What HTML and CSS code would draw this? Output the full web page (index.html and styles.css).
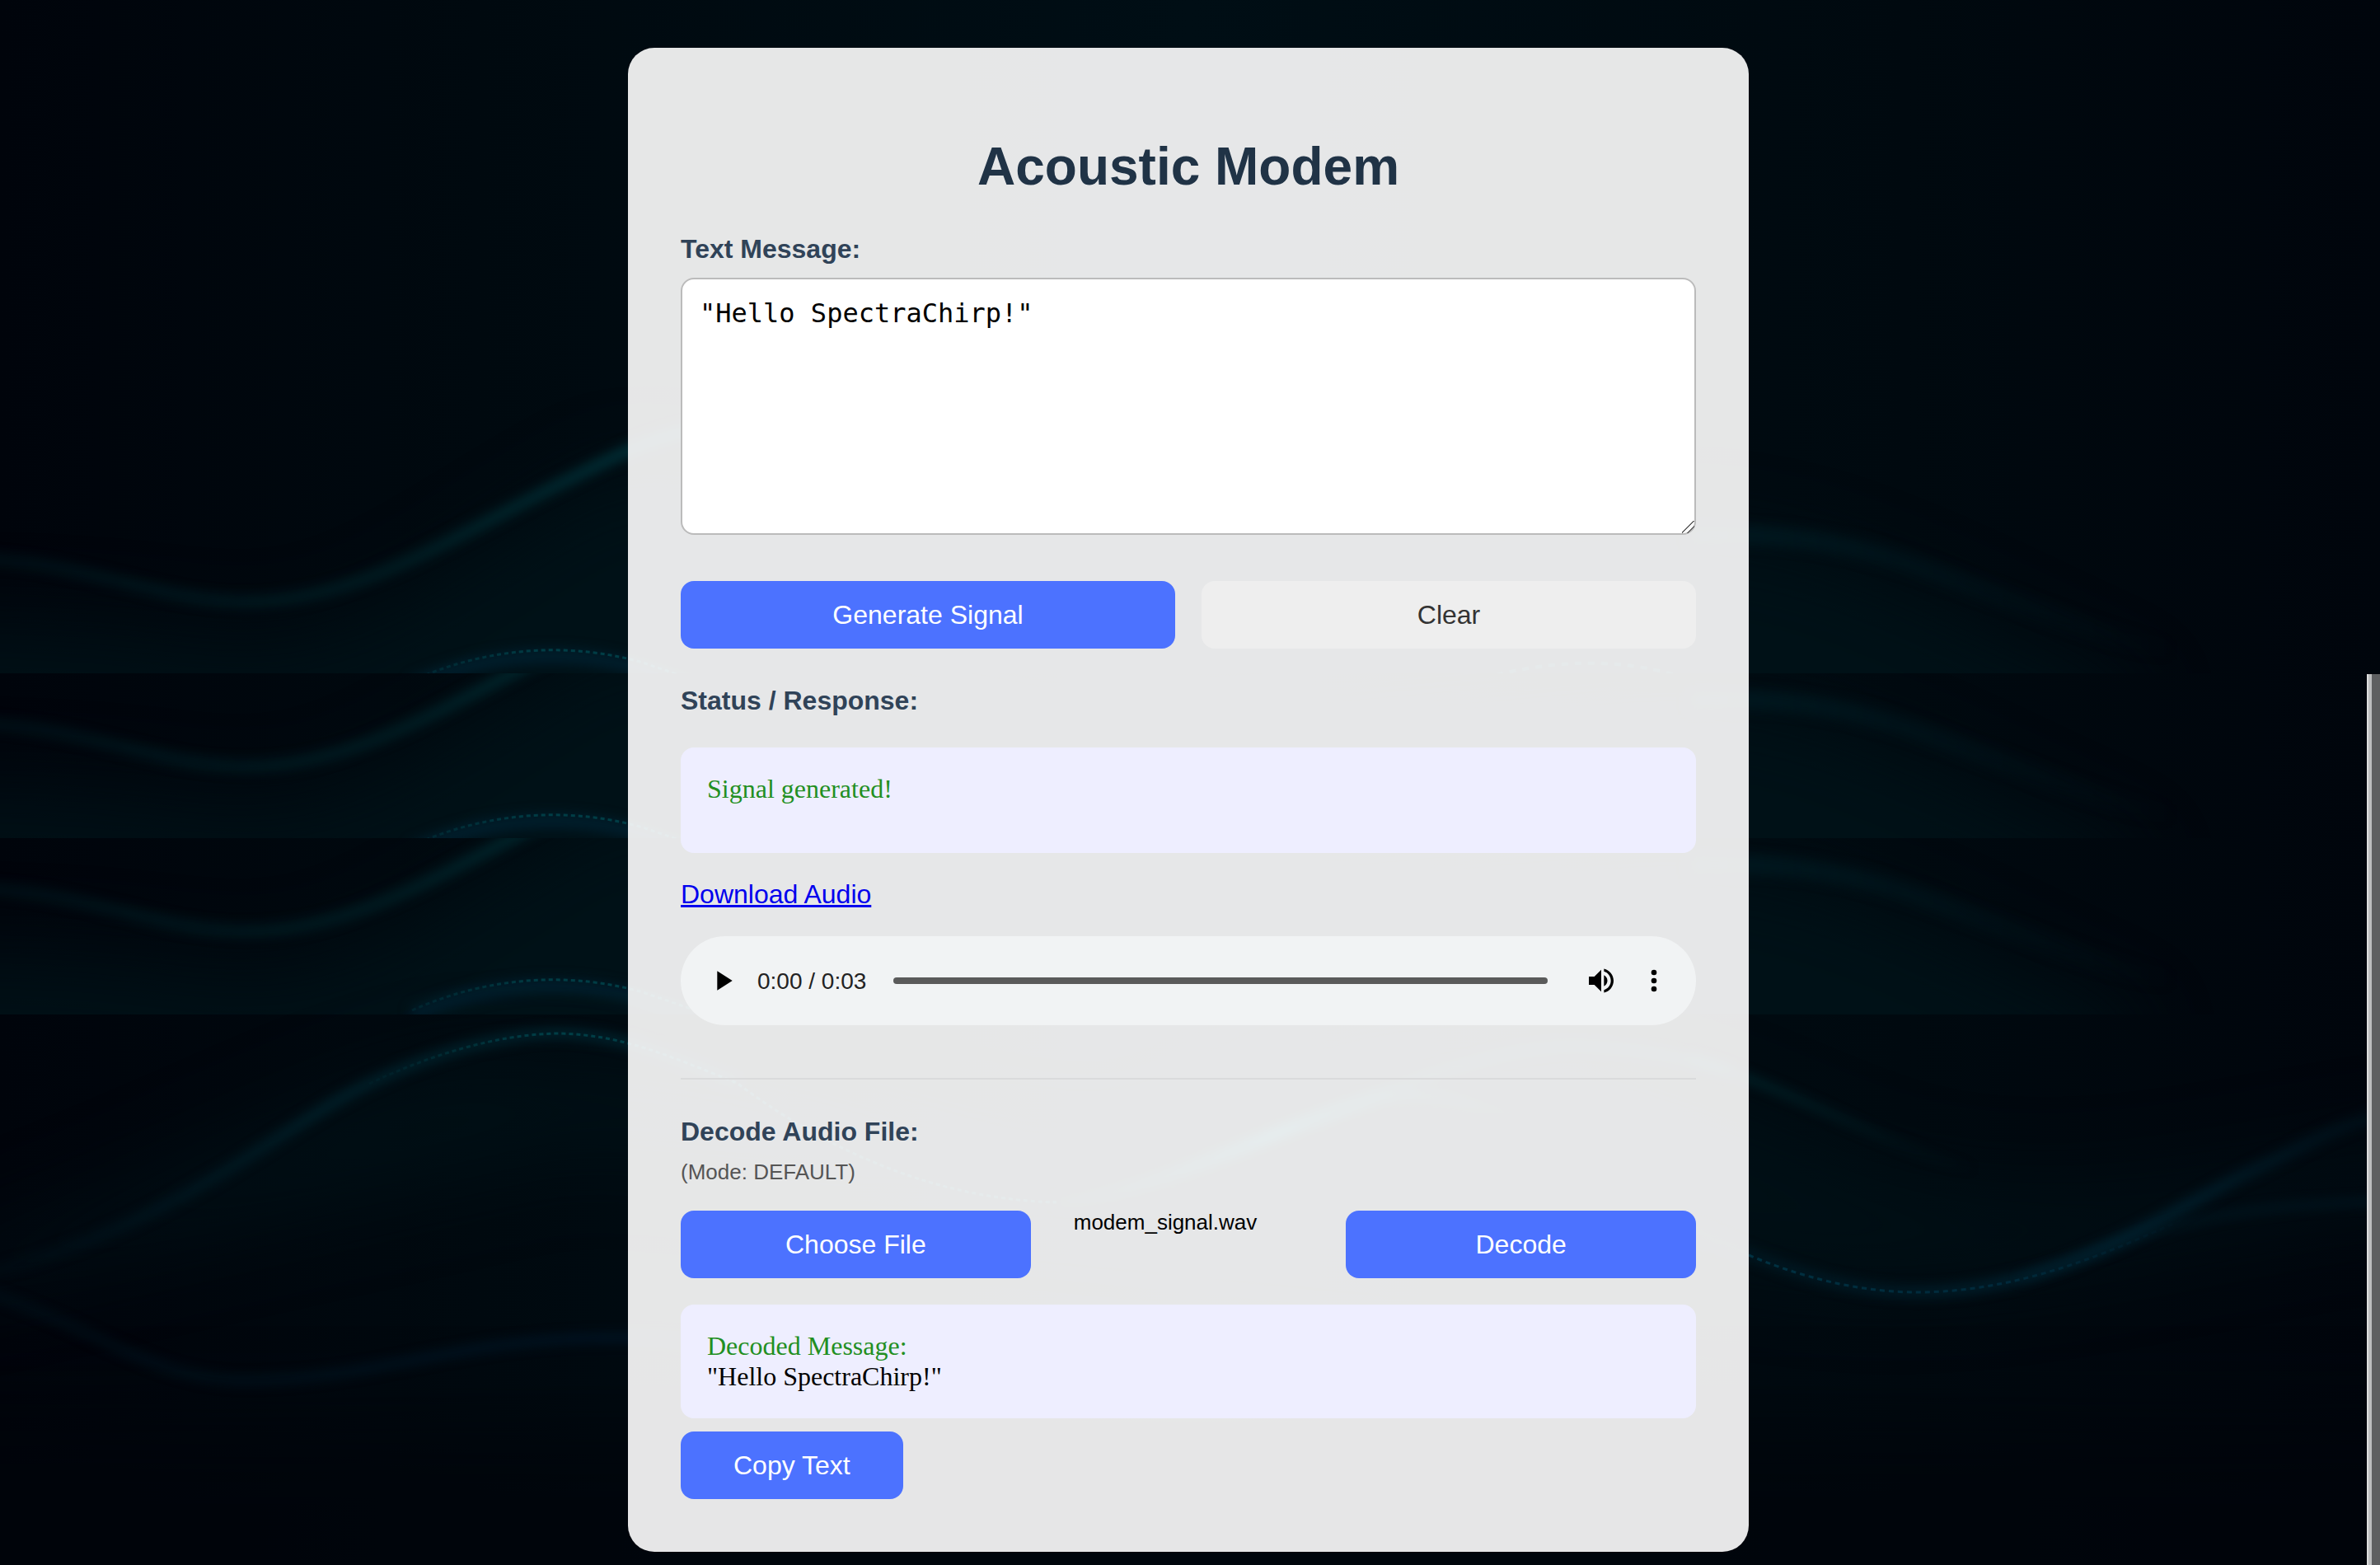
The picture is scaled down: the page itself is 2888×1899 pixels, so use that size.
FILE: index.html
```html
<!DOCTYPE html>
<html lang="en">
<head>
<meta charset="utf-8">
<meta name="viewport" content="width=device-width, initial-scale=1">
<title>Acoustic Modem</title>
<link rel="stylesheet" href="styles.css">
</head>
<body>
<svg class="backdrop" viewBox="0 0 2888 1899" preserveAspectRatio="none" aria-hidden="true">
  <defs>
    <filter id="soft" color-interpolation-filters="sRGB" filterUnits="userSpaceOnUse" x="-400" y="0" width="3700" height="2300"><feGaussianBlur stdDeviation="7"/></filter>
    <filter id="haze" color-interpolation-filters="sRGB" filterUnits="userSpaceOnUse" x="-400" y="0" width="3700" height="2300"><feGaussianBlur stdDeviation="50"/></filter>
    <linearGradient id="rise" gradientUnits="userSpaceOnUse" x1="0" y1="0" x2="800" y2="0">
      <stop offset="0" stop-color="#002a32" stop-opacity=".3"/>
      <stop offset=".6" stop-color="#002a30" stop-opacity=".6"/>
      <stop offset="1" stop-color="#00323a"/>
    </linearGradient>
    <linearGradient id="fall" gradientUnits="userSpaceOnUse" x1="2050" y1="0" x2="2640" y2="0">
      <stop offset="0" stop-color="#001e26" stop-opacity=".7"/>
      <stop offset="1" stop-color="#001e26" stop-opacity="0"/>
    </linearGradient>
    <linearGradient id="deep" gradientUnits="userSpaceOnUse" x1="0" y1="0" x2="1000" y2="0">
      <stop offset="0" stop-color="#001822" stop-opacity=".5"/>
      <stop offset="1" stop-color="#00162c"/>
    </linearGradient>
    <linearGradient id="crest" gradientUnits="userSpaceOnUse" x1="0" y1="0" x2="800" y2="0">
      <stop offset="0" stop-color="#001c28" stop-opacity=".2"/>
      <stop offset=".5" stop-color="#00242e" stop-opacity=".9"/>
      <stop offset="1" stop-color="#002a36" stop-opacity=".8"/>
    </linearGradient>
    <linearGradient id="dots" gradientUnits="userSpaceOnUse" x1="420" y1="0" x2="660" y2="0">
      <stop offset="0" stop-color="#00424a" stop-opacity="0"/>
      <stop offset="1" stop-color="#00464e" stop-opacity=".8"/>
    </linearGradient>
    <linearGradient id="swell" gradientUnits="userSpaceOnUse" x1="2100" y1="0" x2="2888" y2="0">
      <stop offset="0" stop-color="#002230" stop-opacity=".5"/>
      <stop offset=".6" stop-color="#002838" stop-opacity=".9"/>
      <stop offset="1" stop-color="#001824" stop-opacity=".5"/>
    </linearGradient>
    <linearGradient id="swelldots" gradientUnits="userSpaceOnUse" x1="2122" y1="0" x2="2652" y2="0">
      <stop offset="0" stop-color="#00384a" stop-opacity=".8"/>
      <stop offset=".6" stop-color="#00344a" stop-opacity=".6"/>
      <stop offset="1" stop-color="#00344a" stop-opacity="0"/>
    </linearGradient>
    <linearGradient id="ridge" gradientUnits="userSpaceOnUse" x1="1282" y1="0" x2="1870" y2="0">
      <stop offset="0" stop-color="#00404c" stop-opacity=".2"/>
      <stop offset=".45" stop-color="#006878" stop-opacity=".8"/>
      <stop offset="1" stop-color="#00404c" stop-opacity="0"/>
    </linearGradient>
    <linearGradient id="fade" gradientUnits="userSpaceOnUse" x1="2050" y1="0" x2="2400" y2="0">
      <stop offset="0" stop-color="#002c32"/>
      <stop offset="1" stop-color="#00282e" stop-opacity="0"/>
    </linearGradient>
    <clipPath id="strip1"><rect width="2888" height="817"/></clipPath>
    <clipPath id="strip2"><rect y="617" width="2888" height="200"/></clipPath>
    <clipPath id="strip3"><rect y="617" width="2888" height="214"/></clipPath>
    <g id="wave">
      <path d="M-300 760 C150 740 210 780 298 780 C460 780 580 660 762 570 L1444 700 L2000 650 C2200 640 2350 740 2600 850 L2500 1000 H-300Z" fill="#001319" opacity=".8" filter="url(#haze)"/>
      <path d="M-40 677 C110 682 190 730 298 730 C450 730 560 640 762 547 C860 505 960 500 1060 540" fill="none" stroke="url(#rise)" stroke-width="14" filter="url(#soft)"/>
      <path d="M2050 650 C2230 640 2330 690 2400 714 C2500 750 2560 775 2640 790" fill="none" stroke="url(#fall)" stroke-width="24" filter="url(#soft)"/>
      <path d="M500 832 C600 788 700 788 780 812 L900 852" fill="none" stroke="#001e2c" stroke-width="18" filter="url(#soft)"/>
      <path d="M500 826 C600 781 700 781 780 804 L900 845" fill="none" stroke="url(#dots)" stroke-width="3" stroke-dasharray="5 4"/>
      <path d="M1816 819 C1890 800 1970 800 2032 819" fill="none" stroke="#00505a" stroke-width="4" stroke-dasharray="8 8" opacity=".5"/>
    </g>
  </defs>
  <g clip-path="url(#strip1)"><use href="#wave"/></g>
  <g transform="translate(0 200)" clip-path="url(#strip2)"><use href="#wave"/></g>
  <g transform="translate(0 400)" clip-path="url(#strip3)"><use href="#wave"/></g>
  <rect x="-300" y="1720" width="3500" height="400" fill="#00040a" opacity=".7" filter="url(#haze)"/>
  <path d="M-200 1560 C250 1440 450 1250 662 1290 C1100 1300 1300 1500 1500 1340 C1800 1200 2000 1300 2240 1400 C2500 1500 2700 1400 3100 1360 V1440 C2600 1500 2400 1600 2122 1540 L700 1400 L-200 1600Z" fill="#001319" opacity=".6" filter="url(#haze)"/>
  <path d="M-40 1550 C200 1500 350 1360 448 1315 C560 1262 640 1254 680 1254 C760 1256 820 1285 894 1314" fill="none" stroke="url(#crest)" stroke-width="12" filter="url(#soft)"/>
  <path d="M448 1315 C560 1262 640 1254 680 1254 C760 1256 820 1285 894 1314 C1000 1393 1130 1455 1282 1459" fill="none" stroke="url(#dots)" stroke-width="3" stroke-dasharray="5 4"/>
  <path d="M-40 1560 C120 1610 180 1675 298 1675 C460 1675 560 1620 761 1623 C860 1625 900 1640 960 1650" fill="none" stroke="url(#deep)" stroke-width="10" filter="url(#soft)"/>
  <path d="M1282 1459 C1400 1450 1560 1362 1673 1332 C1740 1318 1800 1345 1870 1365" fill="none" stroke="url(#ridge)" stroke-width="14" filter="url(#soft)"/>
  <path d="M1590 1362 C1717 1306 1830 1269 1912 1269 C1990 1271 2050 1285 2100 1300" fill="none" stroke="#00323a" stroke-width="8" filter="url(#soft)"/>
  <path d="M2050 1284 C2200 1330 2300 1400 2400 1419" fill="none" stroke="url(#fade)" stroke-width="9" filter="url(#soft)"/>
  <path d="M2050 1490 C2200 1560 2270 1568 2326 1568 C2500 1568 2640 1465 2728 1423 C2790 1395 2830 1365 2920 1345" fill="none" stroke="url(#swell)" stroke-width="13" filter="url(#soft)"/>
  <path d="M2450 1552 C2620 1500 2640 1462 2920 1457" fill="none" stroke="#001c28" stroke-width="8" opacity=".7" filter="url(#soft)"/>
  <path d="M2122 1523 C2200 1556 2270 1568 2326 1568 C2450 1568 2560 1520 2652 1478" fill="none" stroke="url(#swelldots)" stroke-width="3" stroke-dasharray="6 5"/>
  <rect x="2872" y="818" width="2" height="1081" fill="#dddede"/>
  <rect x="2874" y="818" width="4" height="1081" fill="#bcbdbe"/>
  <rect x="2878" y="818" width="10" height="1081" fill="#5e5f61"/>
</svg>

<main class="card">
  <h1 class="title">Acoustic Modem</h1>

  <label class="label" for="message">Text Message:</label>
  <textarea class="message" id="message" spellcheck="false">"Hello SpectraChirp!"</textarea>

  <div class="actions">
    <button class="button" type="button">Generate Signal</button>
    <button class="button button-plain" type="button">Clear</button>
  </div>

  <h2 class="label section">Status / Response:</h2>
  <div class="panel status" role="status"><span class="ok">Signal generated!</span></div>

  <a class="download" href="#download">Download Audio</a>

  <div class="player">
    <button class="icon-button" type="button" aria-label="Play">
      <svg class="icon" viewBox="0 0 24 24"><path d="M8 5v14l11-7z"/></svg>
    </button>
    <span class="time">0:00 / 0:03</span>
    <input class="seek" type="range" min="0" max="3" value="0" aria-label="Seek">
    <button class="icon-button" type="button" aria-label="Mute">
      <svg class="icon" viewBox="0 0 24 24"><path d="M3 9v6h4l5 5V4L7 9H3zm13.500 3c0-1.770-1.020-3.290-2.500-4.030v8.050c1.480-.730 2.500-2.250 2.500-4.020zM14 3.230v2.060c2.890.860 5 3.540 5 6.710s-2.110 5.850-5 6.710v2.060c4.010-.910 7-4.490 7-8.770s-2.990-7.860-7-8.770z"/></svg>
    </button>
    <button class="icon-button" type="button" aria-label="More options">
      <svg class="icon" viewBox="0 0 24 24"><circle cx="12" cy="6" r="2"/><circle cx="12" cy="12" r="2"/><circle cx="12" cy="18" r="2"/></svg>
    </button>
  </div>

  <hr class="rule">

  <h2 class="label section">Decode Audio File:</h2>
  <p class="mode">(Mode: DEFAULT)</p>

  <div class="decode">
    <button class="button" type="button">Choose File</button>
    <span class="file-name">modem_signal.wav</span>
    <button class="button" type="button">Decode</button>
  </div>

  <div class="panel"><span class="ok">Decoded Message:</span><br>"Hello SpectraChirp!"</div>
  <button class="button copy" type="button">Copy Text</button>
</main>
</body>
</html>
```

FILE: styles.css
```css
* {
  box-sizing: border-box;
}

body {
  position: relative;
  margin: 0;
  min-height: 100vh;
  padding: 58px 36px 16px 32px;
  background: linear-gradient(90deg, #00040b, #00090f 20%, #000e15 50%, #00090f 80%, #00050c);
  font-family: "Liberation Sans", Arial, sans-serif;
  font-size: 32px;
  line-height: 37px;
  color: #000;
}

.backdrop {
  position: absolute;
  inset: 0;
  width: 100%;
  height: 100%;
}

.card {
  position: relative;
  display: flex;
  flex-direction: column;
  max-width: 1360px;
  margin: 0 auto;
  padding: 64px;
  border-radius: 32px;
  background: rgba(255, 255, 255, 0.9);
}

.title {
  margin: 43px 0 45px;
  font-size: 64px;
  line-height: 74px;
  text-align: center;
  color: #203346;
}

.label {
  margin: 0;
  font-size: 32px;
  font-weight: bold;
  color: #304358;
}

.section {
  margin-top: 45px;
}

.message {
  width: 100%;
  height: 312px;
  margin: 16px 0 56px;
  padding: 22px;
  padding-left: 21px;
  border: 2px solid #bbb;
  border-radius: 16px;
  background: #fff;
  font: 32px/38px "DejaVu Sans Mono", monospace;
  color: #000;
  resize: vertical;
}

.message::-webkit-resizer {
  background: linear-gradient(135deg, transparent 46%, #666 46% 52%, transparent 52% 70%, #666 70% 76%, transparent 76%);
}

.actions {
  display: grid;
  grid-template-columns: 1fr 1fr;
  gap: 32px;
}

.button {
  height: 82px;
  padding: 0 64px;
  border: 0;
  border-radius: 16px;
  background: #4c72ff;
  font: inherit;
  color: #fff;
}

.button-plain {
  background: #eee;
  color: #333;
}

.panel {
  padding: 32px;
  border-radius: 16px;
  background: #eeeeff;
  font-family: "Liberation Serif", "Times New Roman", serif;
}

.status {
  min-height: 128px;
  margin-top: 38px;
}

.ok {
  color: #228f22;
}

.download {
  align-self: flex-start;
  margin: 32px 0;
  color: #00e;
}

.player {
  display: flex;
  align-items: center;
  height: 108px;
  padding: 0 31px;
  border-radius: 54px;
  background: #f1f3f4;
}

.icon-button {
  flex: none;
  width: 40px;
  height: 40px;
  padding: 0;
  border: 0;
  background: none;
}

.icon-button + .icon-button {
  margin-left: 24px;
}

.icon {
  display: block;
  width: 40px;
  height: 40px;
}

.time {
  margin-left: 22px;
  font-size: 28px;
  color: #222;
}

.seek {
  flex: 1;
  height: 8px;
  margin: 0 45px 0 33px;
  border-radius: 4px;
  background: #5a5a5a;
  appearance: none;
}

.seek::-webkit-slider-thumb {
  width: 0;
  height: 0;
  appearance: none;
}

.rule {
  width: 100%;
  height: 2px;
  margin: 64px 0 0;
  border: 0;
  background: #dadbdc;
}

.mode {
  margin: 15px 0 32px;
  font-size: 26px;
  line-height: 30px;
  color: #555;
}

.decode {
  display: grid;
  grid-template-columns: 4fr 3fr 4fr;
  gap: 32px;
  margin-bottom: 32px;
}

.file-name {
  padding-left: 20px;
  font-size: 26px;
  line-height: 28px;
}

.copy {
  align-self: flex-start;
  margin-top: 16px;
}
```
